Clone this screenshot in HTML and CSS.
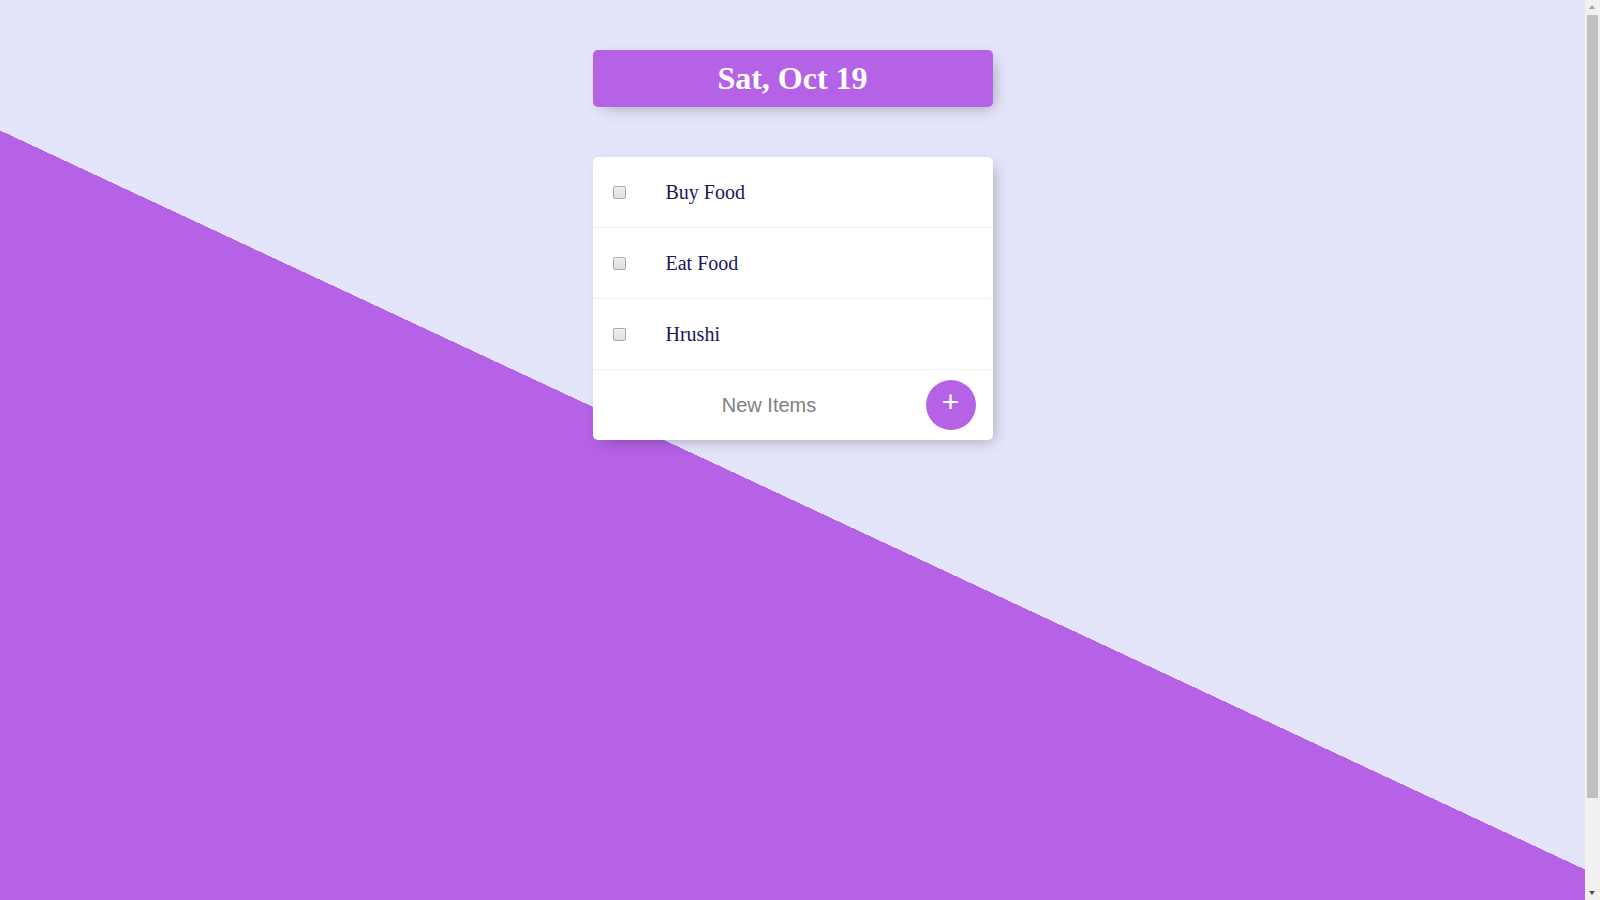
FILE: index.html
```html
<!DOCTYPE html>
<html lang="en">
<head>
<meta charset="utf-8">
<title>To-Do List</title>
<link rel="stylesheet" href="styles.css">
</head>
<body>
  <div class="box heading">
    <h1 class="title">Sat, Oct 19</h1>
  </div>
  <div class="box">
    <div class="item">
      <input class="check" type="checkbox">
      <p class="label">Buy Food</p>
    </div>
    <div class="item">
      <input class="check" type="checkbox">
      <p class="label">Eat Food</p>
    </div>
    <div class="item">
      <input class="check" type="checkbox">
      <p class="label">Hrushi</p>
    </div>
    <form class="item new-form" action="#" onsubmit="return false">
      <input class="new-input" type="text" name="newItem" placeholder="New Items" autocomplete="off">
      <button class="add-btn" type="submit">+</button>
    </form>
  </div>
  <div class="scrollbar" aria-hidden="true">
    <div class="sb-arrow sb-up"></div>
    <div class="sb-track"><div class="sb-thumb"></div></div>
    <div class="sb-arrow sb-down"></div>
  </div>
</body>
</html>
```
FILE: styles.css
```css
html {
  width: 1585px;
  background-color: #e4e4fb;
  background-image: linear-gradient(25deg, #b562e6 50%, #e4e4fb 50%);
  min-height: 1000px;
  font-family: "Liberation Serif", serif;
  overflow-x: hidden;
}

body {
  margin: 0;
  padding: 1px 0 0;
}

.box {
  max-width: 400px;
  margin: 49px auto 50px;
  background: #ffffff;
  border-radius: 5px;
  box-shadow: 5px 5px 15px -5px rgba(0, 0, 0, 0.3);
}

.heading {
  background-color: #b562e6;
  text-align: center;
}

.title {
  color: #ffffff;
  padding: 10px;
  font-size: 32px;
  font-weight: bold;
  margin: 0;
}

.item {
  min-height: 70px;
  display: flex;
  align-items: center;
  border-bottom: 1px solid #f1f1f1;
}

.item:last-child {
  border-bottom: 0;
}

.check {
  appearance: none;
  -webkit-appearance: none;
  box-sizing: border-box;
  margin: 20px;
  width: 13px;
  height: 13px;
  flex: none;
  border: 1px solid #a9a9a9;
  border-radius: 2px;
  background: linear-gradient(#ededed, #dedede);
  box-shadow: inset 0 1px 0 #f6f6f6;
}

.check:checked {
  background: #b562e6;
  border-color: #9148c0;
}

.label {
  margin: 0;
  padding: 20px;
  font-size: 20px;
  font-weight: 200;
  color: #16165a;
}

.new-form {
  text-align: center;
  margin-left: 20px;
}

.new-input {
  box-sizing: border-box;
  text-align: center;
  height: 62px;
  padding: 1px 2px;
  border: none;
  background: transparent;
  font-family: "Liberation Sans", Arial, sans-serif;
  font-size: 20px;
  font-weight: 200;
  width: 313px;
  outline: none;
}

.new-input::placeholder {
  color: grey;
  opacity: 1;
}

.add-btn {
  min-height: 50px;
  width: 50px;
  height: 50px;
  flex: none;
  border-radius: 50%;
  border: 0;
  background-color: #b562e6;
  color: #ffffff;
  font-family: "Liberation Sans", Arial, sans-serif;
  font-size: 30px;
  padding: 0 0 6px 0;
  line-height: 1;
}

.scrollbar {
  position: fixed;
  top: 0;
  right: 0;
  width: 15px;
  height: 900px;
  background: #f1f1f1;
  display: flex;
  flex-direction: column;
}

.sb-arrow {
  height: 15px;
  flex: none;
  position: relative;
}

.sb-arrow::after {
  content: "";
  position: absolute;
  left: 4px;
  width: 0;
  height: 0;
  border-left: 3.5px solid transparent;
  border-right: 3.5px solid transparent;
}

.sb-up::after {
  top: 5px;
  border-bottom: 4px solid #a3a3a3;
}

.sb-down::after {
  top: 6px;
  border-top: 4px solid #505050;
}

.sb-track {
  flex: 1;
  padding: 0 2px;
}

.sb-thumb {
  height: 783px;
  background: #c1c1c1;
}
```
